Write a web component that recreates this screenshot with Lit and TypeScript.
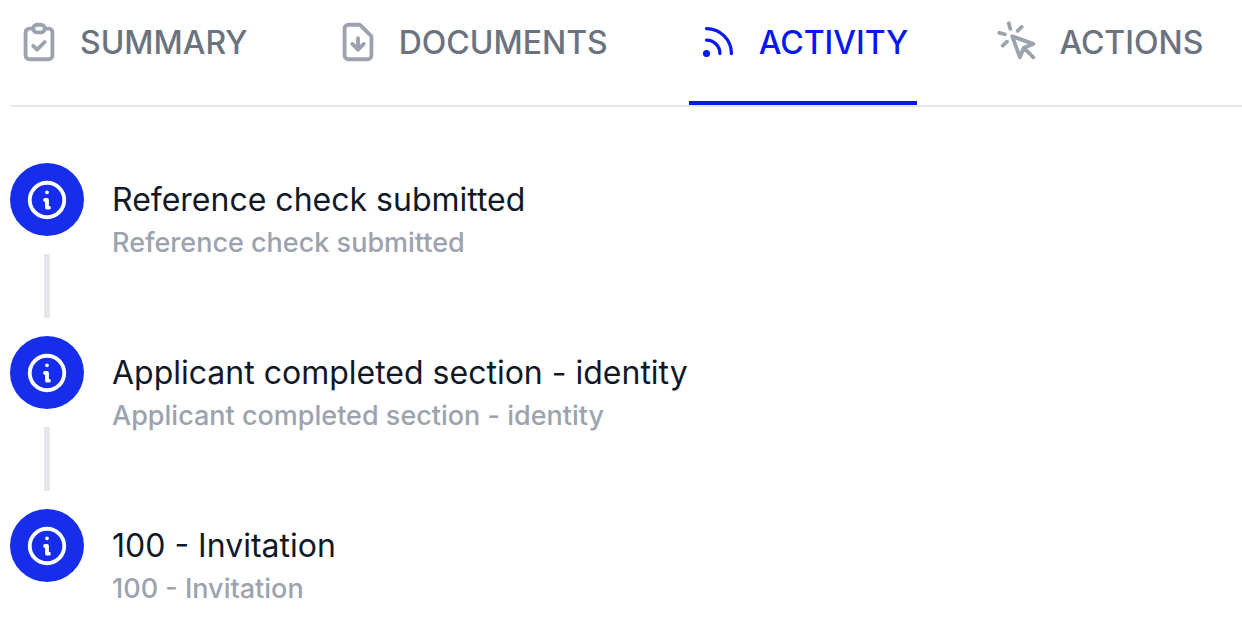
import { LitElement, html, css, svg } from "lit";
import { customElement, property } from "lit/decorators.js";

const icons: Record<string, string> = {
  summary:
    "M9 5H7a2 2 0 00-2 2v12a2 2 0 002 2h10a2 2 0 002-2V7a2 2 0 00-2-2h-2M9 5a2 2 0 002 2h2a2 2 0 002-2M9 5a2 2 0 012-2h2a2 2 0 012 2m-6 9l2 2 4-4",
  documents:
    "M12 10v6m0 0l-3-3m3 3l3-3m2 8H7a2 2 0 01-2-2V5a2 2 0 012-2h5.586a1 1 0 01.707.293l5.414 5.414a1 1 0 01.293.707V19a2 2 0 01-2 2z",
  activity: "M6 5c7.18 0 13 5.82 13 13M6 11a7 7 0 017 7m-6 0a1 1 0 11-2 0 1 1 0 012 0z",
  actions:
    "M15 15l-2 5L9 9l11 4-5 2zm0 0l5 5M7.188 2.239l.777 2.897M5.136 7.965l-2.898-.777M13.95 4.05l-2.122 2.122m-5.657 5.656l-2.12 2.122",
  info: "M13 16h-1v-4h-1m1-4h.01M21 12a9 9 0 11-18 0 9 9 0 0118 0z",
};

@customElement("stroke-icon")
export class StrokeIcon extends LitElement {
  @property() name = "info";

  static styles = css`
    :host {
      display: block;
      flex: none;
      width: 46px;
      height: 46px;
    }
    .icon {
      display: block;
      width: 100%;
      height: 100%;
      fill: none;
      stroke: currentColor;
      stroke-width: 2;
      stroke-linecap: round;
      stroke-linejoin: round;
    }
    .activity {
      stroke-width: 1.7;
    }
  `;

  render() {
    return html`<svg class="icon ${this.name}" viewBox="0 0 24 24" aria-hidden="true">
      ${svg`<path d=${icons[this.name]}></path>`}
    </svg>`;
  }
}

@customElement("tab-bar")
export class TabBar extends LitElement {
  @property() active = "activity";

  static styles = css`
    :host {
      display: block;
    }
    .tabs {
      display: flex;
      gap: 72px;
      border-bottom: 2px solid #e5e7eb;
    }
    .tab {
      display: flex;
      align-items: center;
      gap: 18px;
      padding: 19px 9px 36px 6px;
      border-bottom: 4px solid transparent;
      color: #6b7280;
      font-size: 32px;
      font-weight: 500;
      line-height: 46px;
      text-decoration: none;
      white-space: nowrap;
    }
    .label {
      padding-top: 2px;
      line-height: 44px;
    }
    .glyph {
      color: #9ca3af;
    }
    .current {
      border-color: #0418f0;
      color: #0418f0;
    }
    .current .glyph {
      color: inherit;
    }
  `;

  render() {
    return html`<nav class="tabs" aria-label="Tabs">
      ${["summary", "documents", "activity", "actions"].map(
        (id) => html`<a
          class="tab ${id === this.active ? "current" : ""}"
          href="#${id}"
          aria-current=${id === this.active ? "page" : "false"}
          ><stroke-icon class="glyph" name=${id}></stroke-icon
          ><span class="label">${id.toUpperCase()}</span></a
        >`
      )}
    </nav>`;
  }
}

@customElement("activity-feed")
export class ActivityFeed extends LitElement {
  @property({ attribute: false }) items: string[] = [];

  static styles = css`
    :host {
      display: block;
    }
    .feed {
      margin: 0;
      padding: 0;
      list-style: none;
    }
    .item {
      display: flex;
      gap: 28px;
    }
    .rail {
      display: flex;
      flex: none;
      flex-direction: column;
      align-items: center;
      gap: 18px;
    }
    .badge {
      display: grid;
      place-items: center;
      width: 74px;
      height: 73px;
      border-radius: 50%;
      background: #162eec;
      color: #fff;
    }
    .line {
      width: 6px;
      height: 64px;
      margin-bottom: 18px;
      background: #e5e7eb;
    }
    .body {
      padding-top: 14px;
    }
    .title,
    .detail {
      margin: 0;
    }
    .title {
      color: #111827;
      font-size: 32px;
      font-weight: 400;
      line-height: 46px;
    }
    .detail {
      color: #9ca3af;
      font-size: 27px;
      font-weight: 500;
      line-height: 40px;
    }
  `;

  render() {
    return html`<ul class="feed">
      ${this.items.map(
        (text, i) => html`<li class="item">
          <div class="rail">
            <div class="badge"><stroke-icon name="info"></stroke-icon></div>
            ${i < this.items.length - 1 ? html`<div class="line"></div>` : ""}
          </div>
          <div class="body">
            <h3 class="title">${text}</h3>
            <p class="detail">${text}</p>
          </div>
        </li>`
      )}
    </ul>`;
  }
}

@customElement("app-root")
export class AppRoot extends LitElement {
  static styles = css`
    :host {
      display: block;
      overflow: hidden;
      background: #fff;
      font-family: Inter, "Liberation Sans", sans-serif;
    }
    .page {
      padding-left: 10px;
    }
    .history {
      padding-top: 56px;
    }
  `;

  render() {
    return html`<main class="page">
      <tab-bar active="activity"></tab-bar>
      <activity-feed
        class="history"
        .items=${[
          "Reference check submitted",
          "Applicant completed section - identity",
          "100 - Invitation",
        ]}
      ></activity-feed>
    </main>`;
  }
}
